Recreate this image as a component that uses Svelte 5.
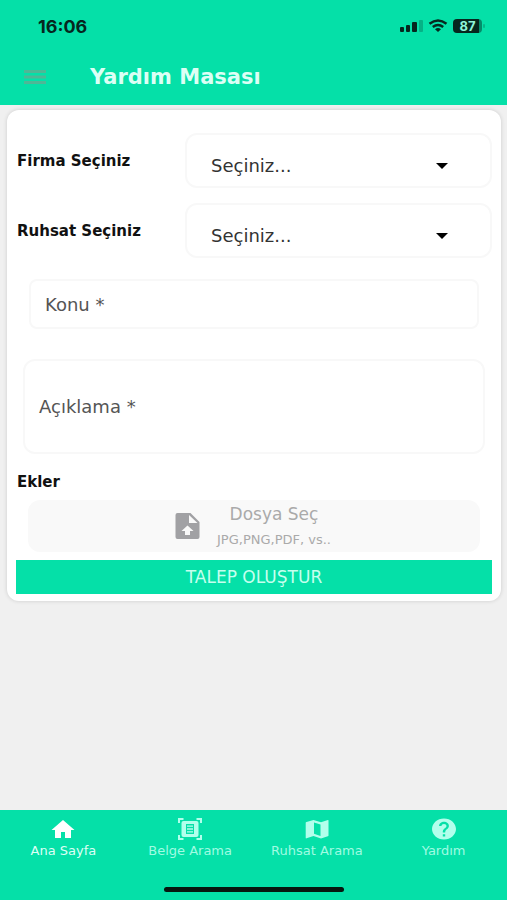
<script>
	let firma = '';
	let ruhsat = '';
	let konu = '';
	let aciklama = '';
	let active = 'home';

	const tabs = [
		{ id: 'home', label: 'Ana Sayfa' },
		{ id: 'document', label: 'Belge Arama' },
		{ id: 'map', label: 'Ruhsat Arama' },
		{ id: 'help', label: 'Yardım' }
	];
</script>

<div class="page">
	<header>
		<div class="status-bar">
			<span class="time">16:06</span>
			<div class="status-icons">
				<svg width="24" height="12" viewBox="0 0 24 12" aria-hidden="true">
					<rect x="0" y="7" width="4" height="5" rx="1" />
					<rect x="6" y="5" width="4" height="7" rx="1" />
					<rect x="12" y="2" width="5" height="10" rx="1" />
					<rect x="19" y="0" width="4" height="12" rx="1" opacity="0.25" />
				</svg>
				<svg width="20" height="14" viewBox="0 0 20 14" aria-hidden="true">
					<path d="M1.5 4.8Q10-1.8 18.500 4.800M4.800 8Q10 4 15.200 8" fill="none" stroke="#06271e" stroke-width="2.500" />
					<path d="M7 10.200Q10 7.800 13 10.200L10 13Z" />
				</svg>
				<div class="battery"><span>87</span></div>
			</div>
		</div>
		<div class="toolbar">
			<button class="menu-button" aria-label="Menü">
				<svg width="24" height="14" viewBox="0 0 24 14">
					<path d="M1 1.500h22M1 7h22M1 12.500h22" stroke="#4fb796" stroke-width="3" />
				</svg>
			</button>
			<h1>Yardım Masası</h1>
		</div>
	</header>

	<main>
		<form class="card" on:submit|preventDefault>
			<div class="row">
				<label for="firma">Firma Seçiniz</label>
				<div class="select">
					<select id="firma" bind:value={firma}>
						<option value="">Seçiniz...</option>
					</select>
					<svg width="12" height="6" viewBox="0 0 12 6" aria-hidden="true"><path d="M0 0h12L6 6z" /></svg>
				</div>
			</div>
			<div class="row">
				<label for="ruhsat">Ruhsat Seçiniz</label>
				<div class="select">
					<select id="ruhsat" bind:value={ruhsat}>
						<option value="">Seçiniz...</option>
					</select>
					<svg width="12" height="6" viewBox="0 0 12 6" aria-hidden="true"><path d="M0 0h12L6 6z" /></svg>
				</div>
			</div>

			<input class="subject" type="text" placeholder="Konu *" aria-label="Konu" bind:value={konu} />
			<textarea placeholder="Açıklama *" aria-label="Açıklama" bind:value={aciklama}></textarea>

			<h2>Ekler</h2>
			<label class="upload">
				<input type="file" accept=".jpg,.png,.pdf" />
				<svg width="25" height="26" viewBox="0 0 24 26" aria-hidden="true">
					<path
						fill="#a1a1a4"
						fill-rule="evenodd"
						d="M2 0h13l9 9v15a2 2 0 0 1-2 2H2a2 2 0 0 1-2-2V2a2 2 0 0 1 2-2zM13.500 2v8H22zM12 12.500l-6 5.500h3.500V22h5v-4H18z"
					/>
				</svg>
				<span class="upload-text">
					<span>Dosya Seç</span>
					<small>JPG,PNG,PDF, vs..</small>
				</span>
			</label>
			<button class="submit">TALEP OLUŞTUR</button>
		</form>
	</main>

	<footer>
		<nav>
			{#each tabs as tab}
				<button class:active={active === tab.id} on:click={() => (active = tab.id)}>
					<svg width="26" height="24" viewBox="0 0 26 24" fill="currentColor" aria-hidden="true">
						{#if tab.id === 'home'}
							<path d="M13 3L1.500 13H5v8h6v-6h4v6h6v-8h3.500z" />
						{:else if tab.id === 'document'}
							<path
								d="M2 6V2h4.500M19.500 2H24v4M24 18v4h-4.500M6.500 22H2v-4"
								fill="none"
								stroke="currentColor"
								stroke-width="2"
							/>
							<path
								fill-rule="evenodd"
								d="M6.500 4h13a2 2 0 0 1 2 2v12a2 2 0 0 1-2 2h-13a2 2 0 0 1-2-2V6a2 2 0 0 1 2-2zM9 7v10h8V7zM10 8.500h6v1.300h-6zM10 11.300h6v1.400h-6zM10 14.200h6v1.300h-6z"
							/>
						{:else if tab.id === 'map'}
							<path
								fill-rule="evenodd"
								d="M23.900 3L17 5.200 9.500 3 2.500 5q-.8.200-.8.800v15q0 .8.8.500L9.500 19l7.500 2.500 6.800-2.200q.7-.2.700-.8V3.500q0-.6-.6-.5zM16.500 19l-6.500-2.200V5.400l6.500 2.100z"
							/>
						{:else}
							<path
								fill-rule="evenodd"
								d="M13 1.500C6.400 1.500 1 6.200 1 12s5.400 10.500 12 10.500S25 17.800 25 12 19.600 1.500 13 1.500zM11.800 17.200h2.400v2.300h-2.400zM16.800 11.400l-1.200 1c-1 .800-1.400 1.500-1.400 3h-2.400v-.600c0-1.200.500-2.200 1.400-3l1.600-1.300c.4-.4.700-.9.700-1.500 0-1.200-1.100-2.100-2.500-2.100s-2.500.9-2.500 2.100H8.100C8.100 6.600 10.300 4.800 13 4.800s4.900 1.800 4.900 4.200c0 .9-.4 1.800-1.100 2.400z"
							/>
						{/if}
					</svg>
					<span>{tab.label}</span>
				</button>
			{/each}
		</nav>
		<div class="home-indicator"></div>
	</footer>
</div>

<style>
	:global(body) {
		margin: 0;
		background: #f0f0f0;
	}
	.page {
		--color-primary: #05e0a8;
		--color-line: #f8f8f8;
		display: flex;
		flex-direction: column;
		min-height: 100vh;
		font-family: 'DejaVu Sans', sans-serif;
	}
	.page * {
		box-sizing: border-box;
	}
	button,
	input,
	select,
	textarea {
		font: inherit;
		margin: 0;
	}
	button {
		border: none;
		padding: 0;
		background: none;
		cursor: pointer;
	}
	svg {
		display: block;
		flex: none;
	}

	header {
		background: var(--color-primary);
	}
	.status-bar {
		display: flex;
		align-items: center;
		justify-content: space-between;
		height: 52px;
		padding: 0 22px 0 38px;
	}
	.time {
		font-family: Inter, sans-serif;
		font-size: 18px;
		font-weight: 700;
		color: #06271e;
	}
	.status-icons {
		display: flex;
		align-items: center;
		gap: 4px;
		fill: #06271e;
	}
	.battery {
		display: flex;
		align-items: center;
		margin-left: 1px;
	}
	.battery span {
		width: 29px;
		height: 14px;
		border-radius: 4px;
		background: linear-gradient(90deg, #06271e 90%, #048b69 90%);
		color: #8ff5d8;
		font: 700 13px/14px Inter, sans-serif;
		text-align: center;
	}
	.battery::after {
		content: '';
		width: 2px;
		height: 4px;
		margin-left: 1px;
		border-radius: 1px;
		background: #04b889;
	}
	.toolbar {
		display: flex;
		align-items: center;
		gap: 43px;
		height: 53px;
		padding: 0 23px 3px;
	}
	h1 {
		margin: 0;
		font-size: 21px;
		line-height: 28px;
		color: #dcfff5;
	}

	main {
		flex: 1;
		padding: 5px 6px 24px 7px;
	}
	.card {
		display: flex;
		flex-direction: column;
		padding: 23px 9px 7px;
		border-radius: 12px;
		background: #fff;
		box-shadow: 0 0 4px rgba(0, 0, 0, 0.15);
	}
	.row {
		display: grid;
		grid-template-columns: 169px 1fr;
		align-items: center;
		margin-bottom: 15px;
	}
	.row label,
	h2 {
		margin: 0;
		padding-left: 1px;
		font-size: 15px;
		line-height: 20px;
		font-weight: 700;
		color: #111;
	}
	.select {
		display: grid;
		align-items: center;
	}
	.select > * {
		grid-area: 1 / 1;
	}
	.select svg {
		justify-self: end;
		margin: 10px 44px 0 0;
		pointer-events: none;
	}
	select,
	.subject,
	textarea {
		border: 2px solid var(--color-line);
		border-radius: 12px;
		background: #fff;
		color: #333;
		font-size: 18px;
		outline: none;
	}
	select {
		appearance: none;
		width: 100%;
		height: 55px;
		padding: 10px 48px 0 24px;
	}
	.subject {
		height: 50px;
		margin: 6px 13px 30px;
		padding: 0 14px;
		border-radius: 8px;
	}
	textarea {
		height: 95px;
		margin: 0 7px 18px;
		padding: 34px 14px 10px;
		line-height: 24px;
		resize: none;
	}
	::placeholder {
		color: #555;
		opacity: 1;
	}
	.upload {
		display: flex;
		align-items: center;
		justify-content: center;
		gap: 17px;
		height: 52px;
		margin: 8px 12px;
		padding-right: 2px;
		border-radius: 12px;
		background: #f9f9f9;
		color: #aaa;
		cursor: pointer;
	}
	.upload input {
		position: absolute;
		width: 1px;
		height: 1px;
		opacity: 0;
	}
	.upload-text {
		display: flex;
		flex-direction: column;
		align-items: center;
		gap: 4px;
		padding-top: 2px;
		font-size: 17px;
		line-height: 22px;
	}
	.upload-text small {
		font-size: 13px;
	}
	.submit {
		height: 34px;
		background: var(--color-primary);
		color: #c5ffee;
		font-size: 17px;
	}

	footer {
		height: 90px;
		background: var(--color-primary);
	}
	nav {
		display: grid;
		grid-template-columns: repeat(4, 1fr);
		padding-top: 7px;
	}
	nav button {
		display: flex;
		flex-direction: column;
		align-items: center;
		height: 70px;
		font-size: 13px;
		line-height: 20px;
		color: #a0fbe2;
		white-space: nowrap;
	}
	nav button svg {
		color: #b2ffec;
	}
	nav button.active {
		color: #dcfff5;
	}
	nav button.active svg {
		color: #fff;
	}
	.home-indicator {
		width: 180px;
		height: 5px;
		margin: 0 auto;
		border-radius: 3px;
		background: #06170f;
	}
</style>
